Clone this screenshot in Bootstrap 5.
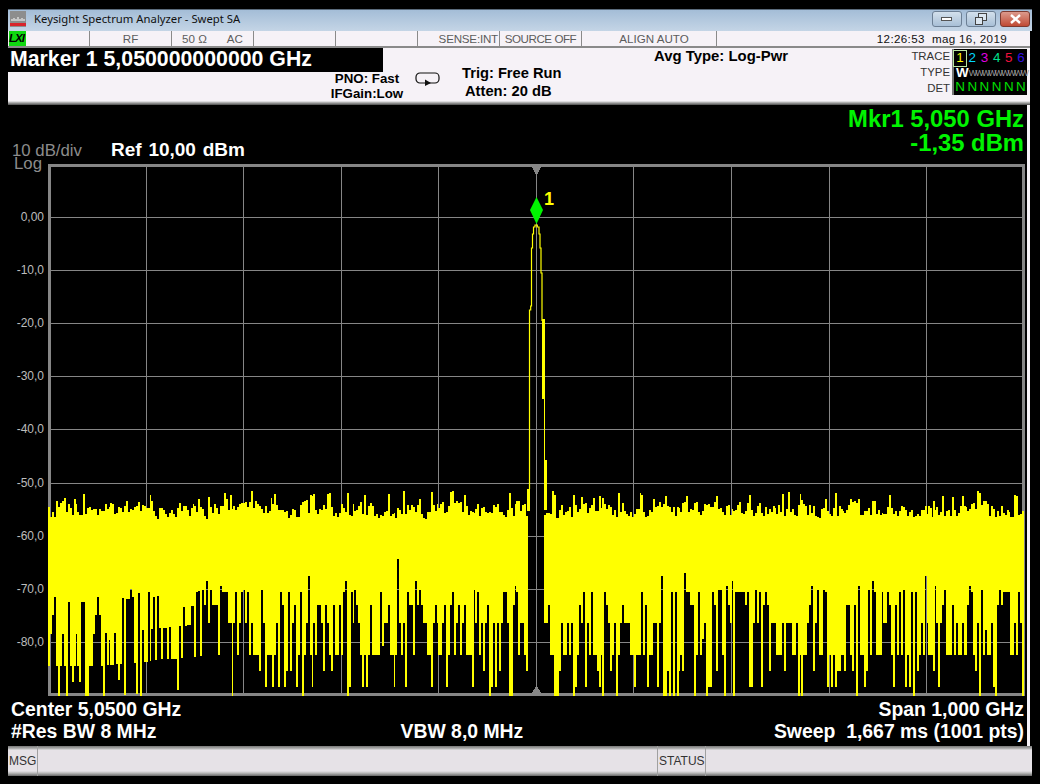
<!DOCTYPE html>
<html lang="en">

<head>
    <meta charset="UTF-8">
    <meta name="viewport" content="width=device-width, initial-scale=1.0">
    <title>Keysight Spectrum Analyzer - Swept SA</title>
    <link href="https://cdn.jsdelivr.net/npm/bootstrap@5.3.0/dist/css/bootstrap.min.css" rel="stylesheet">
    <style>
        body {
            background-color: #000;
            font-family: "Liberation Sans", Arial, sans-serif;
            color: #000;
        }

        .sa-window {
            width: 1024px;
            margin: 9px 0 0 8px;
        }

        /* title bar */
        .sa-title {
            height: 22px;
            padding-bottom: 3px;
            background: linear-gradient(#a4bdd7, #c4d5e6);
            border-top: 1px solid #5b6b7c;
            font-family: "Noto Sans", sans-serif;
            font-size: 11.3px;
            color: #111;
        }

        .sa-appicon {
            width: 16px;
            height: 16px;
            margin: 0 8px 0 2px;
        }

        .win-btns {
            margin-right: 2px;
        }

        .win-btn {
            width: 30px;
            height: 16px;
            border: 1px solid #6c7f94;
            border-radius: 3px;
            background: linear-gradient(#d3e0ec, #a8bfd6);
        }

        .win-btn-close {
            border-color: #7d3a30;
            background: linear-gradient(#dc9a8c, #c04a34);
        }

        .sa-body {
            width: 1022px;
            background-color: #f6f2f7;
        }

        /* top status strip */
        .stat-strip {
            height: 17px;
            border-bottom: 2px solid #8a8a8a;
            font-size: 11.6px;
            line-height: 15px;
            color: #5c5c5c;
        }

        .stat-cell {
            width: 82px;
            height: 15px;
            border-right: 1px solid #8a8a8a;
        }

        .stat-sense {
            padding-right: 1px;
            letter-spacing: -0.2px;
        }

        .stat-source {
            letter-spacing: -0.45px;
        }

        .stat-wide {
            width: 135px;
            padding-left: 10px;
        }

        .stat-time {
            width: 298px;
            color: #111;
            padding-right: 8px;
            letter-spacing: 0.35px;
        }

        .lxi-tag {
            width: 17px;
            height: 15px;
            margin-left: 1px;
            background-color: #10d810;
            color: #000;
            font-weight: bold;
            font-style: italic;
            font-size: 11.5px;
            line-height: 15px;
            letter-spacing: -1px;
        }

        /* settings panel */
        .set-panel {
            height: 57px;
            background: linear-gradient(#f6f2f7 0, #f6f2f7 53px, #c4c4c4 54px, #4c4c4c 57px);
            font-weight: bold;
        }

        .set-left {
            width: 454px;
        }

        .marker-head {
            width: 375px;
            height: 24px;
            background-color: #000;
            color: #fff;
            font-size: 21.3px;
            line-height: 23px;
            padding-left: 2px;
        }

        .pno-info {
            width: 80px;
            margin: -1px 0 0 319px;
            font-size: 13.3px;
            line-height: 15px;
            text-align: center;
            white-space: nowrap;
        }

        .loop-icon {
            width: 26px;
            height: 14px;
            margin: 0 0 0 8px;
        }

        .trig-info {
            width: 192px;
            padding-top: 16px;
            font-size: 14.7px;
            line-height: 18px;
        }

        .trig-info div+div {
            padding-left: 3px;
        }

        .avg-info {
            font-size: 14.9px;
            line-height: 17px;
        }

        .trace-group {
            margin-right: 3px;
        }

        .trace-labels {
            font-weight: normal;
            font-size: 11.4px;
            line-height: 16px;
            color: #333;
            text-align: right;
            padding-right: 2px;
        }

        .trace-box {
            width: 75px;
            height: 46px;
            margin-top: 1px;
            background-color: #000;
            border-left: 2px solid #777;
            font-size: 13.4px;
            font-weight: normal;
            line-height: 14px;
        }

        .trace-row {
            height: 14px;
        }

        .trace-row span {
            width: 12.4px;
            text-align: center;
        }

        .trace-first {
            height: 17px;
            padding-top: 2px;
        }

        .trace-one {
            outline: 1px solid #b9e6a0;
            outline-offset: 0;
            color: #ff0;
        }

        .det-row {
            color: #00e000;
        }

        .type-row b {
            padding-left: 2px;
            width: 15px;
        }

        .trace-row .type-line {
            width: auto;
            color: #9a9a9a;
            font-size: 9px;
            letter-spacing: -2px;
            font-weight: normal;
        }

        /* black measurement area */
        .sa-screen {
            width: 1019px;
            height: 641px;
            background-color: #000;
            color: #fff;
            font-weight: bold;
        }

        .read-top {
            height: 47px;
            padding: 2px 3px 0 4px;
        }

        .mkr-read {
            color: #00f400;
            font-size: 23.8px;
            line-height: 24px;
            text-align: right;
        }

        .ref-block {
            margin-bottom: -8px;
        }

        .div-label {
            color: #8c8c8c;
            font-weight: normal;
            font-size: 16.8px;
            line-height: 18px;
            width: 99px;
        }

        .ref-label {
            font-size: 19px;
            line-height: 20px;
            word-spacing: 1.5px;
        }

        .chart-svg {
            display: block;
            width: 1019px;
            height: 546px;
        }

        .axis-text {
            fill: #bdbdbd;
            font-size: 12px;
            font-weight: normal;
            text-anchor: end;
            font-family: "Liberation Sans", Arial, sans-serif;
        }

        .read-line {
            height: 22px;
            line-height: 22px;
            font-size: 19.4px;
            padding: 0 3px;
            white-space: pre;
        }

        .read-mid {
            margin-left: 244px;
        }

        /* message bar */
        .msg-bar {
            height: 30px;
            background: linear-gradient(#777 0, #bbb 3px, #e6e2e7 4px, #e6e2e7 25px, #bbb 27px, #666 30px);
            font-size: 12px;
            color: #333;
            line-height: 30px;
        }

        .msg-cell {
            width: 30px;
            padding-left: 1px;
            border-right: 1px solid #a0a0a0;
        }

        .msg-gap {
            width: 620px;
            border-right: 1px solid #a0a0a0;
        }

        .status-cell {
            width: 48px;
            padding-left: 1px;
            border-right: 1px solid #a0a0a0;
        }
    </style>
</head>

<body>
    <div class="sa-window">
        <div class="sa-title d-flex align-items-center">
            <svg class="sa-appicon" viewBox="0 0 16 16">
                <rect width="16" height="16" fill="#8d8d8d" />
                <rect y="12" width="16" height="3" fill="#d8242c" />
                <path d="M2 10V8M4 10V7M6 10V8M8 10V6M10 10V8M12 10V7M14 10V8" stroke="#fff" stroke-width="1" />
            </svg>
            <span>Keysight Spectrum Analyzer - Swept SA</span>
            <div class="win-btns ms-auto d-flex gap-1">
                <div class="win-btn d-flex align-items-center justify-content-center">
                    <svg width="12" height="6" viewBox="0 0 12 6">
                        <rect x="0.5" y="1.5" width="10" height="3" fill="#fff" stroke="#555" />
                    </svg>
                </div>
                <div class="win-btn d-flex align-items-center justify-content-center">
                    <svg width="12" height="12" viewBox="0 0 12 12">
                        <rect x="3.5" y="0.5" width="8" height="7" fill="#dbe6f0" stroke="#444" />
                        <rect x="0.5" y="4.5" width="7" height="7" fill="#dbe6f0" stroke="#444" />
                    </svg>
                </div>
                <div class="win-btn win-btn-close d-flex align-items-center justify-content-center">
                    <svg width="13" height="10" viewBox="0 0 13 10">
                        <path d="M2 1L11 9M11 1L2 9" stroke="#fff" stroke-width="2.4" />
                    </svg>
                </div>
            </div>
        </div>

        <div class="sa-body">
            <div class="stat-strip d-flex">
                <div class="stat-cell"><div class="lxi-tag">LXI</div></div>
                <div class="stat-cell text-center">RF</div>
                <div class="stat-cell d-flex justify-content-around">
                    <span>50 Ω</span><span>AC</span>
                </div>
                <div class="stat-cell"></div>
                <div class="stat-cell"></div>
                <div class="stat-cell stat-sense text-end text-nowrap">SENSE:INT</div>
                <div class="stat-cell stat-source text-center text-nowrap">SOURCE OFF</div>
                <div class="stat-cell stat-wide text-center">ALIGN AUTO</div>
                <div class="stat-time text-end">12:26:53&nbsp; mag 16, 2019</div>
            </div>

            <div class="set-panel d-flex">
                <div class="set-left">
                    <div class="marker-head">Marker 1 5,050000000000 GHz</div>
                    <div class="d-flex">
                        <div class="pno-info">
                            <div>PNO: Fast</div>
                            <div>IFGain:Low</div>
                        </div>
                        <svg class="loop-icon" viewBox="0 0 26 14">
                            <rect x="1" y="1" width="23" height="10" rx="4" fill="none" stroke="#111" stroke-width="1.2" />
                            <path d="M10 7.5L16 11L10 14Z" fill="#111" />
                        </svg>
                    </div>
                </div>
                <div class="trig-info">
                    <div>Trig: Free Run</div>
                    <div>Atten: 20 dB</div>
                </div>
                <div class="avg-info">Avg Type: Log-Pwr</div>
                <div class="trace-group ms-auto d-flex">
                    <div class="trace-labels">
                        <div>TRACE</div>
                        <div>TYPE</div>
                        <div>DET</div>
                    </div>
                    <div class="trace-box">
                        <div class="trace-row trace-first d-flex">
                            <span class="trace-one">1</span><span style="color:#00d8ff">2</span><span style="color:#e000e0">3</span><span style="color:#00e090">4</span><span style="color:#f0103c">5</span><span style="color:#3010e0">6</span>
                        </div>
                        <div class="trace-row type-row d-flex text-nowrap">
                            <b class="text-white">W</b><span class="type-line">WWWWWWWWW</span>
                        </div>
                        <div class="trace-row det-row d-flex">
                            <span>N</span><span>N</span><span>N</span><span>N</span><span>N</span><span>N</span>
                        </div>
                    </div>
                </div>
            </div>

            <div class="sa-screen">
                <div class="read-top d-flex justify-content-between">
                    <div class="ref-block d-flex align-items-end align-self-end">
                        <div class="div-label">10 dB/div</div>
                        <div class="ref-label">Ref 10,00 dBm</div>
                    </div>
                    <div class="mkr-read">
                        <div>Mkr1 5,050 GHz</div>
                        <div>-1,35 dBm</div>
                    </div>
                </div>

                <svg id="chart" class="chart-svg" viewBox="8 151 1019 546" shape-rendering="crispEdges"></svg>

                <div class="read-line d-flex justify-content-between">
                    <span>Center 5,0500 GHz</span><span>Span 1,000 GHz</span>
                </div>
                <div class="read-line d-flex">
                    <span>#Res BW 8 MHz</span><span class="read-mid">VBW 8,0 MHz</span><span class="ms-auto">Sweep  1,667 ms (1001 pts)</span>
                </div>
            </div>
        </div>

        <div class="msg-bar d-flex">
            <div class="msg-cell">MSG</div>
            <div class="msg-gap"></div>
            <div class="status-cell">STATUS</div>
        </div>
    </div>

    <script src="https://cdn.jsdelivr.net/npm/bootstrap@5.3.0/dist/js/bootstrap.bundle.min.js"></script>
    <script>
        // lower edge of the noise, read off the reference: [end, y, end, y, ...] in 3x crop units
        const strips = [
            [48, 0, [6,540,12,444,18,387,24,333,30,540,36,630,42,540,48,444,54,540,60,630,66,348,72,540,78,588,84,540,87,444,93,540,99,588,111,348,123,630,135,540,141,444,147,387,153,333,159,387,165,540,171,630,177,441,183,537,186,462,198,537,204,441,210,534,216,582,222,534,228,336,234,627,246,339,252,309,258,333,264,531,270,624,276,321,282,630,288,432,300,528,306,318,309,525,315,429,321,333,327,522,333,330,339,426,345,520,357,426,363,520,369,423,387,519,393,612,399,420,405,516,411,363,417,420,429,417,438,360,444,513,450,318,456,315,462,510,468,312,474,357,480,285,486,411,492,312,498,357,510,357,516,507,522,300,540,318,552,411,555,630,561,411,567,318,573,507,579,411,585,318,591,312,597,411,603,318,609,507,615,411,633,507,639,555,645,312,651,411,657,603,672,507,678,603,684,507,690,411,696,603,702,318,708,357,714,603,720,555,726,318,732,555,738,411,744,357,750,603]],
            [298, 0, [6,507,12,318,18,630,24,507,30,411,36,270,42,507,45,603,51,411,57,507,69,357,75,411,81,555,87,357,93,411,99,507,105,555,111,357,123,507,129,357,135,507,141,318,147,285,153,630,159,603,165,318,168,411,174,312,180,357,186,411,192,507,198,603,204,507,210,603,216,507,222,357,246,507,252,318,258,480,270,411,276,357,288,507,291,603,297,507,303,219,309,411,315,507,321,411,327,603,333,318,345,357,351,507,357,285,363,357,369,312,375,357,387,411,399,507,405,603,411,411,417,357,420,411,432,507,438,411,444,357,450,603,456,507,462,357,468,318,474,507,480,411,486,357,492,507,498,411,504,357,522,507,528,603,531,312,537,411,543,318,549,507,555,411,561,555,567,411,573,357,579,630,585,603,591,411,597,603,603,411,609,555,615,411,627,318,633,411,645,630,651,357,654,300,660,318,666,507,678,411,684,507,690,555]],
            [540, 12, [24,411,30,357,42,507,57,630,63,555,69,411,81,507,87,411,93,507,99,411,105,630,111,603,117,507,123,357,129,411,135,318,141,603,147,411,153,507,159,318,171,507,177,555,183,603,186,507,192,630,198,318,204,357,210,411,216,555,222,507,228,411,234,630,240,507,246,411,252,357,270,411,282,507,288,603,303,507,309,318,315,507,321,357,327,603,339,507,351,411,357,603,363,411,369,270,381,630,387,555,393,630,399,318,405,630,411,318,417,630,420,555,426,507,432,555,438,261,450,318,462,357,468,630,474,507,480,318,486,507,492,459,498,411,504,630,516,603,522,318,528,357,534,555,546,312,552,507,558,630,564,300,570,357,576,411,579,285,585,630,615,318,621,357,627,318,639,603,645,411,651,312,657,411,663,318,669,603,675,357,681,318,687,357,693,555,708,411,726,507,732,411,738,555,750,411]],
            [780, 30, [36,411,48,507,54,411,60,630,63,507,69,630,81,507,87,411,93,357,99,300,105,555,111,411,117,312,129,507,135,312,141,318,147,603,153,507,159,603,165,507,171,603,183,555,192,507,198,555,210,357,216,507,222,555,228,357,234,630,240,300,252,507,258,603,264,555,270,312,276,507,282,285,288,318,306,507,309,318,321,411,327,318,333,357,339,507,345,603,351,357,357,507,363,318,369,507,375,312,381,603,387,507,393,603,399,318,405,630,411,318,417,555,423,507,429,411,435,507,441,270,444,411,459,507,465,555,468,300,474,411,480,603,486,411,492,357,498,312,516,507,522,357,528,507,534,411,546,507,552,411,561,507,567,357,573,300,579,318,585,507,591,555,597,411,603,630,609,312,615,507,621,432,633,507,639,411,645,603,651,630,657,357,663,312,669,357,690,318,702,507,708,411,714,507,720,318,726,411,732,630]]
        ];

        const gridX = [146, 243, 341, 438, 536, 633, 731, 829, 926];
        const gridY = [216, 269, 322, 375, 428, 482, 535, 588, 641];
        const axisLabels = ['0,00', '-10,0', '-20,0', '-30,0', '-40,0', '-50,0', '-60,0', '-70,0', '-80,0'];

        let seed = 7;
        function rnd() {
            seed = (seed * 1103515245 + 12345) % 2147483648;
            return seed / 2147483648;
        }

        // top of the noise wanders, with a few sharp peaks
        let lastTop = 510;
        function noiseTop() {
            if (rnd() < 0.12) return 490 + rnd() * 10;
            lastTop = lastTop * 0.25 + (499 + rnd() * 20) * 0.75;
            return lastTop;
        }

        function rect(x, y, w, h, fill) {
            return `<rect x="${x}" y="${y}" width="${w}" height="${h}" fill="${fill}"/>`;
        }

        let out = '';

        // graticule
        gridX.forEach(x => { out += rect(x, 163, 1, 530, '#868686'); });
        gridY.forEach(y => { out += rect(48, y, 976, 1, '#868686'); });
        out += rect(48, 163, 977, 3, '#868686') + rect(48, 692, 977, 3, '#868686');
        out += rect(48, 163, 3, 532, '#868686') + rect(1022, 163, 3, 532, '#868686');
        out += '<path d="M532 166H541L537 174H536Z" fill="#868686"/><path d="M536 685H537L541 692H532Z" fill="#868686"/>';

        // noise floor
        strips.forEach(([base, start, list]) => {
            let from = start;
            for (let i = 0; i < list.length; i += 2) {
                let end = list[i];
                let bottom = Math.round(485 + list[i + 1] / 3);
                for (let z = from; z < end; z += 6) {
                    let x = Math.round(base + z / 3);
                    let w = Math.max(1, Math.round(Math.min(6, end - z) / 3));
                    let top = Math.round(noiseTop());
                    out += rect(x, top, w, bottom - top, '#ffff00');
                }
                from = end;
            }
        });

        // carrier peak
        out += '<path d="M529.5 488V309H530.7V305H531.5V247H532.5V233H533.5V226H535V224H537.3V226H539V233H540V247H541V272H542V320" fill="none" stroke="#ffff00" stroke-width="1.2" shape-rendering="auto"/>';
        out += rect(527, 488, 3, 22, '#ffff00');
        out += rect(542, 318, 3, 80, '#ffff00') + rect(544, 398, 1, 62, '#ffff00') + rect(544, 459, 3, 50, '#ffff00');

        // marker
        out += '<path d="M536.5 196L543 209L536.5 223L530 209Z" fill="#00f400" shape-rendering="auto"/>';
        out += '<text x="544" y="204" fill="#ffff00" font-size="18" font-weight="bold" font-family="Liberation Sans, Arial, sans-serif" shape-rendering="auto">1</text>';

        // y axis labels
        out += '<text class="axis-text" x="42" y="168" style="fill:#8c8c8c;font-size:16.8px">Log</text>';
        axisLabels.forEach((t, i) => {
            out += `<text class="axis-text" x="44" y="${gridY[i] + 4}">${t}</text>`;
        });

        document.getElementById('chart').innerHTML = out;
    </script>
</body>

</html>
